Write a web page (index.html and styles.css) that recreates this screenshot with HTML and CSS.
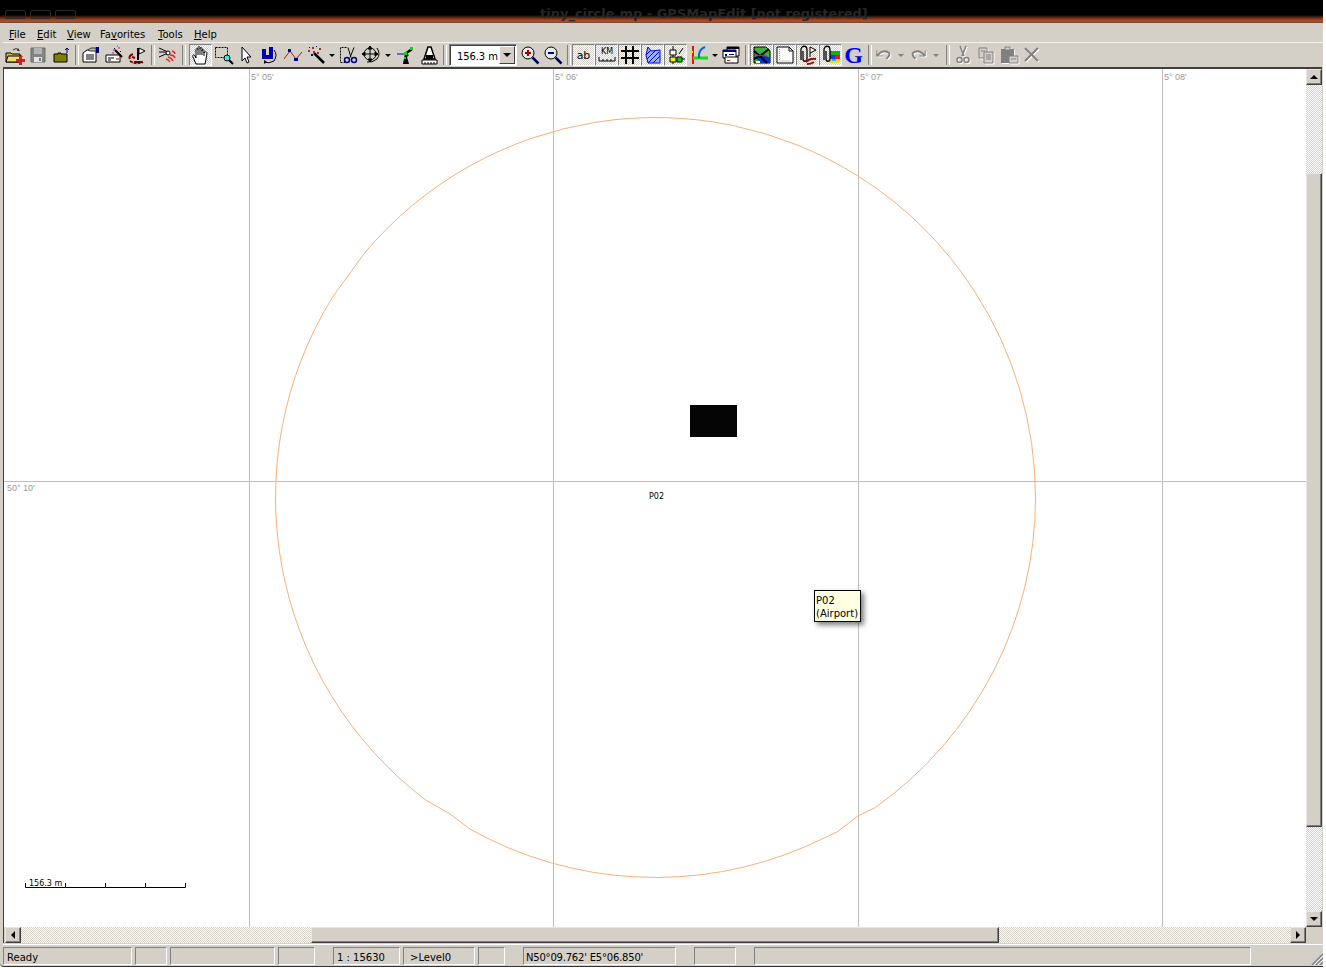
FILE: index.html
```html
<!DOCTYPE html>
<html lang="en">
<head>
	<meta charset="UTF-8">
	<title>GPSMapEdit</title>
	<link rel="stylesheet" href="styles.css">
</head>
<body>
<div class="window">
	<div class="titlebar">
		<div class="ghosts"><i></i><i></i><i></i></div>
		<span class="title">tiny_circle.mp - GPSMapEdit [not registered]</span>
	</div>

	<ul class="menu">
		<li class="m-file"><u>F</u>ile</li>
		<li class="m-edit"><u>E</u>dit</li>
		<li class="m-view"><u>V</u>iew</li>
		<li class="m-fav">Fa<u>v</u>orites</li>
		<li class="m-tools"><u>T</u>ools</li>
		<li class="m-help"><u>H</u>elp</li>
	</ul>

	<div class="toolbar">
		<!-- file -->
		<div class="tb"><svg viewBox="0 0 20 20"><path d="M1 8h5l1 1h8v8H1z" fill="#d8bc48" stroke="#000"/><path d="M3 11h14l-2 6H1z" fill="#f0dc70" stroke="#000"/><path d="M8 5q3-3 6 0" fill="none" stroke="#333"/><path d="M13 3l2 3-3 0z" fill="#333"/><path d="M14 11h3v3h3v3h-3v3h-3v-3h-3v-3h3z" fill="#e01818"/></svg></div>
		<div class="tb"><svg viewBox="0 0 20 20"><path d="M3 3h14v14H3z" fill="#858585" stroke="#6a6a6a"/><path d="M6 3h8v6H6z" fill="#b4b4b4"/><path d="M6 12h8v5H6z" fill="#e4e4e4"/><path d="M11 13h2v3h-2z" fill="#777"/></svg></div>
		<div class="tb"><svg viewBox="0 0 20 20"><path d="M3 9h4V8h3v1h6v8H3z" fill="#808000" stroke="#000"/><path d="M16 8V3m-2 2l2-2 2 2" fill="none" stroke="#000080"/></svg></div>
		<div class="sep first"></div>
		<div class="tb"><svg viewBox="0 0 20 20"><path d="M2 8l4-3h9v12H2z" fill="#fff" stroke="#000"/><path d="M5 10h8M5 12h8M5 14h8" stroke="#000"/><path d="M7 5l3-2h5v3H9z" fill="#bbb" stroke="#333"/><path d="M15 2h3v6h-3z" fill="#000080"/></svg></div>
		<div class="tb"><svg viewBox="0 0 20 20"><path d="M2 10h14v7H2z" fill="#fff" stroke="#000"/><path d="M4 13h6M4 15h3" stroke="#000"/><path d="M12 14h3" stroke="#a00"/><path d="M11 5l7 7" stroke="#000" stroke-width="2"/><path d="M9 5h2M14 3h2M8 8h2M13 1h1" stroke="#c03030"/><path d="M10 3h1v1h-1zM16 6h1v1h-1z" fill="#000080"/></svg></div>
		<div class="tb"><svg viewBox="0 0 20 20"><path d="M11 3v12" stroke="#000" stroke-width="2"/><path d="M12 3l6 3-6 3z" fill="#fff" stroke="#000"/><path d="M7 16h8v2H7z" fill="#222"/><path d="M6 9q-5 2-3 5" fill="none" stroke="#800000" stroke-width="2"/><path d="M3 16q6 4 13 1" fill="none" stroke="#800000" stroke-width="2" stroke-dasharray="3 1"/><path d="M5 12l3 1" stroke="#800000" stroke-width="2"/></svg></div>
		<div class="sep"></div>
		<div class="tb"><svg viewBox="0 0 20 20"><path d="M1 3l9 4-9 0M1 12l9-4" fill="none" stroke="#000"/><circle cx="10" cy="8" r="2" fill="#fff" stroke="#000"/><path d="M14 6q3 1 3 3M12 10q4 0 5 3M10 12q4 1 5 4M8 14q3 1 4 3" fill="none" stroke="#f02020" stroke-width="1.4"/></svg></div>
		<div class="sep wide"></div>
		<div class="tb on"><svg viewBox="0 0 20 20"><path d="M5 19l-3-7c-1-2 1-3 2-1l1 2V5c0-2 2-2 2 0V3c0-2 2-2 2 0v1c0-2 2-2 2 0v2c0-2 2-2 2 0v2c1-2 3-1 3 0l-1 6-1 5z" fill="#fff" stroke="#000"/><path d="M7 5v5M9 4v6M11 5v5M13 7v4" stroke="#000"/></svg></div>
		<div class="tb"><svg viewBox="0 0 20 20"><path d="M1.500 2.500h12v10h-12z" fill="none" stroke="#000" stroke-dasharray="2 1"/><circle cx="13" cy="13" r="3" fill="#40e0e8" stroke="#000"/><path d="M15 15l4 4" stroke="#000" stroke-width="2"/></svg></div>
		<div class="tb"><svg viewBox="0 0 20 20"><path d="M5 2v14l3-3 2 5 2-1-2-5h4z" fill="#fff" stroke="#000"/></svg></div>
		<div class="tb"><svg viewBox="0 0 20 20"><path d="M2 4h4v6h3V2h4v12H2z" fill="#0000b0"/><path d="M14 5q4 5 0 11-5 3-10 1" fill="none" stroke="#000"/><path d="M4 15v4l3-2z"/></svg></div>
		<div class="tb"><svg viewBox="0 0 20 20"><path d="M1 14l6-8 6 8 6-7" fill="none" stroke="#a01818"/><path d="M5 4h3v3H5zM11 13h4v3h-4z" fill="#0000a0"/></svg></div>
		<div class="tb"><svg viewBox="0 0 20 20"><path d="M8 8l10 10" stroke="#000" stroke-width="2.500"/><path d="M6 2h2v2H6zM13 3h2v2h-2zM2 5h2v2H2zM7 6h2v2H7zM11 7h2v2h-2z" fill="#a03030"/><path d="M3 2h1v1H3zM10 1h1v1h-1zM5 9h2v2H5z" fill="#000080"/></svg></div>
		<div class="drop"></div>
		<div class="tb"><svg viewBox="0 0 20 20"><path d="M8.500 2.500h-6v15h6" fill="none" stroke="#000" stroke-dasharray="2 1"/><path d="M10 2.500l3 10M16 2.500l-4 10" stroke="#000"/><circle cx="9" cy="15" r="2.500" fill="none" stroke="#000080" stroke-width="1.500"/><circle cx="16" cy="15" r="2.500" fill="none" stroke="#000080" stroke-width="1.500"/></svg></div>
		<div class="tb"><svg viewBox="0 0 20 20"><circle cx="9" cy="9" r="6" fill="none" stroke="#000"/><path d="M9 1v16M2 9h14M9 1L7 4h4zM9 17l-2-3h4zM1 9l3-2v4zM17 9l-3-2v4z" stroke="#000" stroke-width="1"/><path d="M16 3q4 6 0 11-5 4-10 3" fill="none" stroke="#000"/></svg></div>
		<div class="drop long"></div>
		<div class="tb"><svg viewBox="0 0 20 20"><path d="M1 9h8" stroke="#0000e0"/><path d="M9 9l7-5" stroke="#000" stroke-width="2.500"/><path d="M9 8l-2 11h6l-2-7 2-2z"/><path d="M14 2h3v3h-3zM8 7h3v3H8zM8 12h2v2H8z" fill="#10d010"/></svg></div>
		<div class="tb"><svg viewBox="0 0 20 20"><path d="M3 15h15v4H3z" fill="#fff" stroke="#000"/><path d="M6 17v2M9 17v2M12 17v2M15 17v2" stroke="#000"/><path d="M5 14l4-12h3l4 12z" fill="#fff" stroke="#000" stroke-width="1.500"/><path d="M7 10h7v4H7z"/></svg></div>
		<div class="sep"></div>

		<!-- scale -->
		<div class="combo"><span>156.3 m</span><b></b></div>
		<div class="tb"><svg viewBox="0 0 20 20"><circle cx="8" cy="8" r="6" fill="#e8e8e8" stroke="#000"/><path d="M5 8h6M8 5v6" stroke="#a00000" stroke-width="2"/><path d="M12.500 12.500l6 6" stroke="#000060" stroke-width="2.500"/></svg></div>
		<div class="tb"><svg viewBox="0 0 20 20"><circle cx="8" cy="8" r="6" fill="#e8e8e8" stroke="#000"/><path d="M5 8h6" stroke="#000080" stroke-width="2"/><path d="M12.500 12.500l6 6" stroke="#000060" stroke-width="2.500"/></svg></div>
		<div class="sep"></div>

		<!-- map view -->
		<div class="tb on"><span class="ab">ab</span></div>
		<div class="tb on"><svg viewBox="0 0 20 20"><text x="10" y="9" class="km">KM</text><path d="M2 12v4h16v-4M6 14v2M10 14v2M14 14v2" fill="none" stroke="#000"/></svg></div>
		<div class="tb on"><svg viewBox="0 0 20 20"><path d="M6 1v18M13 1v18M1 6h18M1 13h18" stroke="#000" stroke-width="2"/></svg></div>
		<div class="tb on"><svg viewBox="0 0 20 20"><path d="M5 2l3 4 9-1v13H5l-2-8z" fill="#9ab0ff" stroke="#0000e0"/><path d="M4 14l9-9M5 18L16 7M10 18l7-7M3 10l5-5" stroke="#0000e0"/></svg></div>
		<div class="tb on"><svg viewBox="0 0 20 20"><path d="M7 1v18M13 14h6M13 9l4-6" stroke="#000" fill="none"/><path d="M4 5h6v5H4z" fill="#fff" stroke="#000"/><path d="M4 12h6v5H4z" fill="#f0f020" stroke="#000"/><path d="M11 12h5v5h-5z" fill="#10d010" stroke="#000"/></svg></div>
		<div class="tb"><svg viewBox="0 0 20 20"><path d="M4 1v18" stroke="#f01010" stroke-width="2"/><path d="M0 7h4" stroke="#f0e020" stroke-width="2"/><path d="M4 13h15" stroke="#10e010" stroke-width="3"/><path d="M10 13V9q1-5 6-7" fill="none" stroke="#1060e0" stroke-width="2"/></svg></div>
		<div class="drop"></div>
		<div class="tb"><svg viewBox="0 0 20 20"><path d="M6 2h12v9H6z" fill="#fff" stroke="#000"/><path d="M6 2h12v2H6z" fill="#000"/><path d="M2 5h13v8H2z" fill="#fff" stroke="#000"/><path d="M2 5h13v2H2zM4 9h2v2H4zM8 9h5v1H8z" fill="#000080"/><path d="M4 12h13v6H4z" fill="#fff" stroke="#000"/><path d="M6 15h3v1H6z" fill="#e01010"/></svg></div>
		<div class="sep"></div>
		<div class="tb on"><svg viewBox="0 0 20 20"><path d="M2 2h12l4 4v12H2z" fill="#40b040" stroke="#000"/><path d="M2 12l8 6h8v-5l-6-3z" fill="#0030e0"/><path d="M2 6l6 5 9-7M2 14l6-3 7 7" fill="none" stroke="#000" stroke-width="2"/><path d="M3 10l12 1" stroke="#f02020"/><path d="M4 16h4v2H4z" fill="#fff"/></svg></div>
		<div class="tb on"><svg viewBox="0 0 20 20"><path d="M2 2h12l4 4v12H2z" fill="#fff" stroke="#000"/><path d="M14 2v4h4" fill="none" stroke="#000"/><path d="M4.500 4v12h12" fill="none" stroke="#999" stroke-dasharray="1 1"/></svg></div>
		<div class="tb on"><svg viewBox="0 0 20 20"><path d="M3 15V5c0-5 6-5 6 0v9c0 3-4 3-4 0V6" fill="none" stroke="#000" stroke-width="1.300"/><path d="M12 2v10M12 2l6 3-6 3" fill="#fff" stroke="#000"/><path d="M8 17q4-4 10-3M9 19q4 0 7-2" fill="none" stroke="#901010" stroke-width="2"/></svg></div>
		<div class="tb on"><svg viewBox="0 0 20 20"><path d="M9 6h10v4H9z" fill="#10b010"/><path d="M9 10h5v4H9z" fill="#2030f0"/><path d="M14 10h5v4h-5z" fill="#f01020"/><path d="M9 14h10v4H9z" fill="#f0e020"/><path d="M11 14h4v2h-4z" fill="#20b0f0"/><path d="M3 15V5c0-5 6-5 6 0v9c0 3-4 3-4 0V6" fill="none" stroke="#000" stroke-width="1.300"/></svg></div>
		<div class="tb"><span class="google">G</span></div>
		<div class="sep"></div>

		<!-- edit, disabled -->
		<div class="tb off narrow"><svg viewBox="0 0 20 20"><path d="M3 5v6h6" fill="none" stroke="#808080"/><path d="M3 11q7-8 13-3 1 3-3 6" fill="none" stroke="#808080" stroke-width="2"/></svg></div>
		<div class="drop off-arrow"></div>
		<div class="tb off narrow"><svg viewBox="0 0 20 20"><path d="M17 5v6h-6" fill="none" stroke="#808080"/><path d="M17 11q-7-8-13-3-1 3 3 6" fill="none" stroke="#808080" stroke-width="2"/></svg></div>
		<div class="drop off-arrow"></div>
		<div class="sep"></div>
		<div class="tb off"><svg viewBox="0 0 20 20"><path d="M7 1l4 10M13 1l-4 10" stroke="#808080" stroke-width="1.500"/><circle cx="6.500" cy="15" r="2.500" fill="none" stroke="#808080" stroke-width="1.500"/><circle cx="13.500" cy="15" r="2.500" fill="none" stroke="#808080" stroke-width="1.500"/></svg></div>
		<div class="tb off"><svg viewBox="0 0 20 20"><path d="M3 3h8v10H3z" fill="#d4d0c8" stroke="#808080"/><path d="M8 7h9v11H8z" fill="#d4d0c8" stroke="#808080"/><path d="M10 10h5M10 12h5M10 14h5M5 6h4" stroke="#808080"/></svg></div>
		<div class="tb off"><svg viewBox="0 0 20 20"><path d="M2 4h13v14H2z" fill="#808080"/><path d="M6 2h5v3H6z" fill="#d4d0c8" stroke="#808080"/><path d="M10 11h9v7h-9z" fill="#d4d0c8" stroke="#808080"/><path d="M12 14h5" stroke="#808080"/></svg></div>
		<div class="tb off"><svg viewBox="0 0 20 20"><path d="M3 3l13 13M16 3L3 16" stroke="#808080" stroke-width="2"/></svg></div>
	</div>

	<div class="client">
		<div class="map">
			<svg class="chart" viewBox="4 69 1302 858">
				<path class="grid" d="M249.500 69V927M553.500 69V927M858.500 69V927M1162.500 69V927M4 481.500H1306"/>
				<path class="circle" d="M1035.500 497.500A380 380 0 0 1 875 807.700L858 816 837 832 806 846.400A380 380 0 0 1 470 829.100L450 814 425 799.500A380 380 0 0 1 333 296.500L364.400 253.200A380 380 0 0 1 858 176A380 380 0 0 1 975 292A380 380 0 0 1 1035.500 497.500z"/>
				<path class="scale" d="M25.500 883V887.500H185.500V883M65.500 883V887M105.500 883V887M145.500 883V887"/>
				<rect x="690" y="405" width="47" height="32" fill="#050505"/>
			</svg>
			<span class="lab lon1">5° 05'</span>
			<span class="lab lon2">5° 06'</span>
			<span class="lab lon3">5° 07'</span>
			<span class="lab lon4">5° 08'</span>
			<span class="lab lat1">50° 10'</span>
			<span class="point">P02</span>
			<span class="scaletext">156.3 m</span>
			<div class="tip">P02<br>(Airport)</div>
		</div>

		<div class="vscroll">
			<div class="sbtn"><i class="up"></i></div>
			<div class="track t-top"></div>
			<div class="thumb v"></div>
			<div class="track fill"></div>
			<div class="sbtn"><i class="down"></i></div>
		</div>
		<div class="hscroll">
			<div class="sbtn"><i class="left"></i></div>
			<div class="track t-left"></div>
			<div class="thumb h"></div>
			<div class="track fill"></div>
			<div class="sbtn"><i class="right"></i></div>
		</div>
		<div class="corner"></div>
	</div>

	<div class="status">
		<div class="panel p-ready">Ready</div>
		<div class="panel p-a"></div>
		<div class="panel p-b"></div>
		<div class="panel p-c"></div>
		<div class="panel p-scale gap">1 : 15630</div>
		<div class="panel p-level">&gt;Level0</div>
		<div class="panel p-d"></div>
		<div class="panel p-pos gap">N50°09.762' E5°06.850'</div>
		<div class="panel p-e gap"></div>
		<div class="panel p-f gap"></div>
		<svg class="grip" viewBox="0 0 12 12"><path d="M12 1L1 12M12 5L5 12M12 9L9 12" stroke="#808080" stroke-width="1.500"/><path d="M12 3L3 12M12 7L7 12" stroke="#fff"/></svg>
	</div>
</div>
</body>
</html>
```

FILE: styles.css
```css
*{box-sizing: border-box;}
body,ul{margin: 0;padding: 0;}
body{background: #fff;font: 10px/13px "DejaVu Sans",sans-serif;color: #000;}
li{list-style: none;}

.window{width: 1323px;height: 967px;padding-left: 3px;background: #d4d0c8;border-bottom: 1px solid #333;border-bottom-left-radius: 4px;overflow: hidden;display: flex;flex-direction: column;}

.titlebar{height: 23px;margin-left: -3px;flex: none;display: flex;position: relative;overflow: hidden;background: linear-gradient(#000 0,#000 15px,#4a2010 17px,#a04a2a 20px,#a8502e 22px,#5a3a2a 23px);}
.ghosts{display: flex;gap: 4px;margin: 10px 0 0 5px;}
.ghosts i{width: 21px;height: 9px;border: 1px solid #2a2a2a;border-radius: 2px;}
.title{position: absolute;left: 540px;top: 6px;font-weight: bold;font-size: 13px;line-height: 15px;color: #262626;white-space: nowrap;}

.menu{height: 20px;flex: none;display: flex;align-items: center;border-bottom: 1px solid #f4f2ee;padding-top: 3px;}
.menu li{white-space: nowrap;}
.m-file{margin-left: 6px;width: 28px;}
.m-edit{width: 30px;}
.m-view{width: 33px;}
.m-fav{width: 58px;}
.m-tools{width: 36px;}

.toolbar{height: 24px;flex: none;display: flex;align-items: center;}
.tb{width: 23px;height: 22px;flex: none;display: flex;align-items: center;justify-content: center;border: 1px solid transparent;}
.tb svg{width: 20px;height: 20px;display: block;}
.tb.narrow{width: 21px;}
.on{border-color: #808080 #fff #fff #808080;background: repeating-conic-gradient(#fff 0 25%,#d4d0c8 0 50%) 0 0/2px 2px;}
.off svg{filter: drop-shadow(1px 1px 0 #fff);}
.sep{width: 8px;height: 20px;flex: none;position: relative;}
.sep::after{content: "";position: absolute;left: 3px;top: 0;width: 2px;height: 20px;border-left: 1px solid #808080;border-right: 1px solid #fff;}
.sep.first{width: 7px;}
.sep.wide{width: 10px;}
.drop{width: 9px;height: 20px;flex: none;display: flex;align-items: center;justify-content: center;}
.drop::after{content: "";border: 3px solid transparent;border-top: 3px solid #000;border-bottom: 0;}
.drop.long{width: 12px;}
.off-arrow{width: 14px;}
.off-arrow::after{border-top-color: #808080;}

.combo{width: 68px;height: 22px;margin: 0 1px;flex: none;display: flex;justify-content: space-between;align-items: center;white-space: nowrap;background: #fff;border: 1px solid;border-color: #808080 #fff #fff #808080;box-shadow: inset 1px 1px 0 #404040;padding: 1px 1px 1px 7px;letter-spacing: -.1px;}
.combo span{padding-top: 3px;}
.combo b{width: 16px;height: 18px;flex: none;background: #d4d0c8;border: 1px solid;border-color: #fff #404040 #404040 #fff;display: flex;align-items: center;justify-content: center;}
.combo b::after{content: "";border: 4px solid transparent;border-top: 4px solid #000;border-bottom: 0;}
.ab{font-size: 11px;}
.km{font: 8px "DejaVu Sans",sans-serif;text-anchor: middle;}
.google{font: bold 24px/20px "Liberation Serif",serif;color: #0000ff;}

.client{flex: none;display: grid;grid-template-columns: 1302px 16px;grid-template-rows: 858px 16px;width: 1319px;border-top: 2px solid #404040;border-left: 1px solid #404040;}
.map{background: #fff;position: relative;overflow: hidden;}
.chart{position: absolute;left: 0;top: 0;width: 1302px;height: 858px;}
.grid{stroke: #bdbdbd;fill: none;}
.circle{stroke: #f8b078;fill: none;}
.scale{stroke: #000;fill: none;}
.lab{position: absolute;font: 9px/11px "Liberation Sans",sans-serif;color: #999;white-space: nowrap;}
.lon1{left: 247px;top: 3px;}
.lon2{left: 551px;top: 3px;}
.lon3{left: 856px;top: 3px;}
.lon4{left: 1160px;top: 3px;}
.lat1{left: 3px;top: 414px;}
.point{position: absolute;left: 645px;top: 422px;font-size: 8px;line-height: 11px;}
.scaletext{position: absolute;left: 25px;top: 809px;font-size: 8px;line-height: 11px;}
.tip{position: absolute;left: 810px;top: 521px;width: 47px;height: 32px;padding: 3px 0 0 1px;background: #ffffe1;border: 1px solid #000;box-shadow: 3px 3px 5px rgba(0,0,0,.5);white-space: nowrap;}

.vscroll{display: flex;flex-direction: column;}
.hscroll{display: flex;margin-left: 1px;}
.track{background: repeating-conic-gradient(#fff 0 25%,#d4d0c8 0 50%) 0 0/2px 2px;}
.track.fill{flex: 1;}
.t-top{height: 88px;}
.t-left{width: 290px;}
.thumb,.sbtn{background: #d4d0c8;border: 1px solid;border-color: #e8e6e0 #404040 #404040 #e8e6e0;box-shadow: inset -1px -1px 0 #808080;}
.thumb.v{height: 654px;}
.thumb.h{width: 688px;}
.sbtn{width: 16px;height: 16px;flex: none;display: flex;align-items: center;justify-content: center;}
.sbtn i{border: 4px solid transparent;}
.up{border-top: 0 !important;border-bottom-color: #000 !important;}
.down{border-bottom: 0 !important;border-top-color: #000 !important;}
.left{border-left: 0 !important;border-right-color: #000 !important;}
.right{border-right: 0 !important;border-left-color: #000 !important;}
.corner{background: #d4d0c8;}

.status{height: 22px;flex: none;margin-top: 1px;border-top: 1px solid #fff;padding-top: 2px;display: flex;gap: 3px;align-items: flex-start;}
.panel{height: 18px;padding: 3px 0 0 3px;border: 1px solid;border-color: #808080 #fff #fff #808080;white-space: nowrap;overflow: hidden;flex: none;}
.panel.gap{margin-left: 15px;}
.p-ready{width: 129px;}
.p-a{width: 32px;}
.p-b{width: 105px;}
.p-c{width: 37px;}
.p-scale{width: 67px;}
.p-level{width: 72px;padding-left: 6px;}
.p-d{width: 27px;}
.p-pos{width: 153px;padding-left: 2px;letter-spacing: -.2px;}
.p-e{width: 42px;}
.p-f{width: 497px;}
.grip{width: 12px;height: 12px;margin: 6px 0 0 auto;flex: none;}
```
